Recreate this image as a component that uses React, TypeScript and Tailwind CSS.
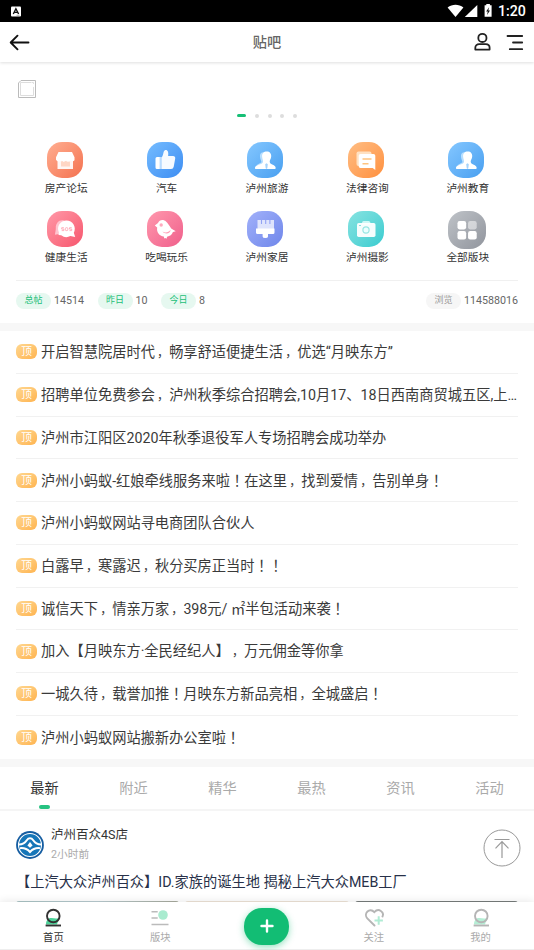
import React from "react";

const sans = "font-[Roboto,'Noto_Sans_CJK_SC',sans-serif] [text-spacing-trim:space-all]";

/* Full-width commas and exclamation marks are centred horizontally in their cell. */
function Txt({ children }: { children: string }) {
  return (
    <>
      {children.split(/([，！])/).map((p, i) => {
        if (p === "，") return <span key={i} className="pl-[2.240px] text-[12px]">{p}</span>;
        if (p === "！") return <span key={i} lang="zh-TW" className="font-['Noto_Sans_CJK_TC',sans-serif]">{p}</span>;
        return p;
      })}
    </>
  );
}

function StatusBar() {
  return (
    <div className="flex h-[22px] shrink-0 items-center bg-black pl-[11px] pr-[8px]">
      <svg width="10" height="11" viewBox="0 0 10 11">
        <rect y="0.5" width="10" height="10" rx="1" fill="#fff" />
        <path d="M2.3 8 4.9 2.8 7.6 8M3.4 6.4h3" stroke="#111" strokeWidth="1.4" fill="none" />
        <path d="M5.5 9.3h3" stroke="#888" strokeWidth="0.6" />
      </svg>
      <svg className="ml-auto" width="46" height="16" viewBox="0 0 46 16">
        <path d="M.6 4.600C5.200.8 11.800.8 16.400 4.600L8.500 14Z" fill="#fff" />
        <path d="M30.300 2v12H17.800Z" fill="#fff" />
        <path d="M37.600 2.300h1.700V1h3.600v1.300h1.700v11.500h-7Z" fill="#fff" />
        <path d="m42.100 4.200-3 4.300h1.700l-.8 3.500 3-4.600h-1.700Z" fill="#111" />
      </svg>
      <span className="ml-[5px] w-[28px] text-[14.200px] leading-none font-medium text-white">1:20</span>
    </div>
  );
}

function Header() {
  return (
    <header className="relative z-10 flex h-10 shrink-0 items-center justify-between bg-white pr-[10px] pl-[9px] shadow-[0_1px_3px_rgba(0,0,0,0.13)]">
      <svg className="w-[76px]" width="76" height="20" viewBox="0 0 76 20" fill="none" stroke="#111" strokeWidth="1.900" strokeLinecap="round" strokeLinejoin="round">
        <path d="M19.500 10.500H2M8.500 3.700 1.700 10.500l6.800 6.800" />
      </svg>
      <h1 className="pt-[2px] pl-[1px] text-[14.200px] font-medium text-[#666]">贴吧</h1>
      <svg width="76" height="22" viewBox="0 0 76 22" fill="none" stroke="#222" strokeWidth="1.800" strokeLinecap="round" strokeLinejoin="round">
        <circle cx="34.400" cy="6.900" r="4.100" />
        <path d="M27.300 18.600v-1.800c0-2.300 1.700-3.600 3.900-3.600h6.500c2.200 0 3.900 1.300 3.900 3.600v1.800Z" />
        <path d="M59.500 5h14.700M65 11.500h9.200M61.800 18.200h12.400" />
      </svg>
    </header>
  );
}

const glyphs: Record<string, React.ReactNode> = {
  shop: (
    <>
      <path d="M10.500 18h15.500v9H10.500z" fill="#fff" fillOpacity=".92" />
      <path d="M14 20.500c0-2 2-2 2.500-.5.800-1.800 3-1.800 3.600 0 .600-1.600 2.700-1.500 2.900.500V24.500h-9z" fill="#ffbb9c" fillOpacity=".55" />
      <path d="M11.500 10h13.500l2.500 5.300v3c-1 1.500-3 1.500-4 .2-1.200 1.500-3.200 1.500-4.400 0-1.200 1.500-3.200 1.500-4.400 0-1.600 1.500-4.600 1.200-5.700-.8v-2.500z" fill="#fff" />
    </>
  ),
  thumb: (
    <>
      <path d="M9.500 15h3.400v12h-2.900q-1.500 0-1.500-1.500v-9q0-1.500 1.500-1.500z" fill="#fff" />
      <path d="M12.800 15h1.800v12h-1.800z" fill="#b9dcff" />
      <path d="M14.500 15.600C16.600 13.500 16 9.500 17.600 8.400c2.400-1.300 4.400 1 3.500 5.600H26c1.600 0 2.500 1 2.200 2.500l-1.500 8.300q-.4 2.200-2.600 2.200h-9.600z" fill="#fff" fillOpacity=".95" />
    </>
  ),
  user: (
    <>
      <path d="M17.500 10.500c-3-.7-5 1.500-4.500 4.500.3 2.600 1.400 3.800 1.400 5.200L9 23.500h9z" fill="#c4e5ff" fillOpacity=".85" />
      <path d="M19.800 9.500c3 0 4.600 2.100 4.400 5-.2 2.700-1.700 3.600-1.500 5.400.5 3 5.800 2.300 6 6.100 0 .6-.3.900-.9.900H8.800c-.6 0-.9-.3-.9-.9.300-3.800 7.500-3.100 8.100-6.100.2-1.800-.7-2.800-.9-5.400-.2-2.900 1.500-5 4.700-5z" fill="#fff" />
      <path d="m19.500 21.200 1.300 1-.5 4-.8.800-.8-.8-.500-4z" fill="#a5d3fb" />
    </>
  ),
  note: (
    <>
      <path d="M10.500 9.500h11q2 0 2 2V24h-13q-2 0-2-2V11.500q0-2 2-2z" fill="#ffe1c2" />
      <path d="M12.500 12h13q1.800 0 1.800 1.800V28l-2.600-2H12.500q-1.800 0-1.800-1.800V13.800q0-1.800 1.800-1.800z" fill="#fff" />
      <path d="M14.500 17h9m-9 4.700h6" stroke="#ffc47f" strokeWidth="1.500" />
    </>
  ),
  sos: (
    <>
      <path d="M17 9.500c-5-1-8.400 2.800-8.200 7.500.1 2-.6 4.500-.9 6.800l4-.8z" fill="#ffc4cf" />
      <path d="M19.500 9.500a8.300 8.300 0 0 1 7.300 12.200l1.400 4.300-4.800-1a8.600 8.600 0 0 1-9.200-.700l-2.700-.3.400-2.500A8.300 8.300 0 0 1 19.500 9.500z" fill="#fff" />
      <g fill="none" stroke="#ffa0ae" strokeWidth=".8">
        <path d="M16.900 16.700h-2.200v1.400h2.200v1.500h-2.200M24.700 16.700h-2.200v1.400h2.200v1.500h-2.200" />
        <rect x="18.400" y="16.700" width="2.400" height="2.900" rx=".8" />
      </g>
    </>
  ),
  bird: (
    <>
      <path d="M7.800 14.500 11 12c1.300-3.600 5.500-4 8-1.600 2 2 3.500 4 5.200 7l4.500 2.800-2.800.9c-.8 2.600-3 4.300-5.800 4.600l-.6 2-1.200-.8-1 .6-.5-1.900c-4.500-.6-7.500-4.500-6.600-9.100z" fill="#fff" />
      <circle cx="14.200" cy="14" r="1.700" fill="#ffa9bd" />
      <path d="M15.500 20.500c3 1.800 6 1 8-1.800.3 3.500-5 5.500-8 1.800z" fill="#ff9db5" />
    </>
  ),
  brush: (
    <>
      <path d="M10.500 9H27v9H10.500z" fill="#fff" fillOpacity=".72" />
      <path d="M14.500 9v4M18.700 9v4M22.900 9v4" stroke="#93a3f4" strokeWidth="1.100" />
      <path d="M9 17.500h18.500v4q0 1.500-1.500 1.500h-5v2.500q0 1.500-2.700 1.500t-2.700-1.500V23h-5q-1.600 0-1.600-1.500z" fill="#fff" />
    </>
  ),
  camera: (
    <>
      <path d="M14 11.500q.2-1.500 1.500-1.500h5.200q1.300 0 1.600 1.500v2H14z" fill="#cdf8f6" />
      <rect x="9" y="12" width="18.500" height="14" rx="1.700" fill="#fff" fillOpacity=".94" />
      <circle cx="18" cy="19" r="3.100" fill="#eaffff" stroke="#99e6e3" strokeWidth="1.200" />
      <path d="M11 14.500h2" stroke="#8be0dd" />
    </>
  ),
  grid: (
    <>
      <rect x="9" y="9.500" width="8.200" height="8" rx="2" fill="#fff" />
      <rect x="19" y="9.500" width="8.200" height="8" rx="2" fill="#fff" fillOpacity=".5" />
      <rect x="9" y="19" width="8.200" height="8" rx="2" fill="#fff" />
      <rect x="19" y="19" width="8.200" height="8" rx="2" fill="#fff" />
    </>
  ),
};

const boards = [
  { t: "房产论坛", g: "shop", c: "from-[#ffae91] to-[#f3714f]" },
  { t: "汽车", g: "thumb", c: "from-[#75bcff] to-[#3d8df2]" },
  { t: "泸州旅游", g: "user", c: "from-[#84c7ff] to-[#479ff0]" },
  { t: "法律咨询", g: "note", c: "from-[#ffbd82] to-[#ff903c]" },
  { t: "泸州教育", g: "user", c: "from-[#84c7ff] to-[#479ff0]" },
  { t: "健康生活", g: "sos", c: "from-[#ff98a8] to-[#f6546d]" },
  { t: "吃喝玩乐", g: "bird", c: "from-[#ff98ae] to-[#ef5e8b]" },
  { t: "泸州家居", g: "brush", c: "from-[#a2b1fa] to-[#6f86ea]" },
  { t: "泸州摄影", g: "camera", c: "from-[#85e3e1] to-[#33ccd0]" },
  { t: "全部版块", g: "grid", c: "from-[#bfc3c8] to-[#91959d]" },
];

function Boards() {
  return (
    <div className="mx-4 mt-[24px] grid h-[138px] grid-cols-5 grid-rows-[69px_69px]">
      {boards.map((b) => (
        <div key={b.t} className="flex flex-col items-center">
          <div className="flex h-[40px] items-start pr-[3px]">
            <div
              className={`${b.g === "grid" ? "ml-[2px] size-[38px] rounded-[16px]" : "size-9 rounded-[15px]"} bg-linear-to-br ${b.c}`}
            >
              <svg viewBox="0 0 36 36" className="size-full">{glyphs[b.g]}</svg>
            </div>
          </div>
          <span className="text-[10.700px] leading-[14px] text-[#333]">{b.t}</span>
        </div>
      ))}
    </div>
  );
}

function Stat({ label, value, gray }: { label: string; value: string; gray?: boolean }) {
  return (
    <div className="flex items-center gap-[3px]">
      <span
        className={`flex h-4 w-[35px] items-center justify-center rounded-full pb-px text-[9px] ${gray ? "bg-[#f6f6f6] text-[#999]" : "bg-[#e6f8f0] text-[#1bbf78]"}`}
      >
        {label}
      </span>
      <span className="text-[10.700px] text-[#666]">{value}</span>
    </div>
  );
}

const posts = [
  "开启智慧院居时代，畅享舒适便捷生活，优选“月映东方”",
  "招聘单位免费参会，泸州秋季综合招聘会,10月17、18日西南商贸城五区,上…",
  "泸州市江阳区2020年秋季退役军人专场招聘会成功举办",
  "泸州小蚂蚁-红娘牵线服务来啦！在这里，找到爱情，告别单身！",
  "泸州小蚂蚁网站寻电商团队合伙人",
  "白露早，寒露迟，秋分买房正当时！！",
  "诚信天下，情亲万家，398元/ ㎡半包活动来袭！",
  "加入【月映东方·全民经纪人】，万元佣金等你拿",
  "一城久待，载誉加推！月映东方新品亮相，全城盛启！",
  "泸州小蚂蚁网站搬新办公室啦！",
];

function ProfileIcon({ active }: { active?: boolean }) {
  const c = active ? "#333" : "#b5b5b5";
  return (
    <svg width="18" height="20" viewBox="0 0 18 20" fill="none">
      <path d="M2 16.500c0-4.500 2.500-7 5.500-6.500 3 .4 5 1 7.500 0l-2 6.500z" fill={active ? "#4ed39a" : "#b5eed5"} />
      <circle cx="9.300" cy="8" r="6.300" stroke={c} strokeWidth="1.900" />
      <path d="M1.600 17.500h15.400" stroke={c} strokeWidth="1.900" />
    </svg>
  );
}

function NavItem({ label, active, children }: { label: string; active?: boolean; children: React.ReactNode }) {
  return (
    <div className="flex flex-1 flex-col items-center pt-[6px]">
      <div className="flex h-[22px] items-start">{children}</div>
      <span className={`text-[10.300px] leading-[15px] ${active ? "text-[#333]" : "text-[#aaa]"}`}>{label}</span>
    </div>
  );
}

export default function App() {
  return (
    <div lang="zh-CN" className={`flex h-[950px] w-[534px] flex-col overflow-hidden bg-white ${sans}`}>
      <StatusBar />
      <Header />
      <main className="min-h-0 flex-1 overflow-hidden">
        <div className="h-[51.500px] pt-[18px] pl-[18px]">
          <svg width="18" height="18" viewBox="0 0 18 18" fill="none">
            <path d="M.5 3 3 .5h14.500v17H.5z" stroke="#bbb" />
            <path d="M2.500 2.500h13v13h-13z" stroke="#ddd" />
            <path d="m13 2 4 3v3l-3-2z" fill="#fff" />
          </svg>
        </div>
        <div className="flex h-[4px] items-center justify-center gap-[8.600px]">
          <i className="h-[3.500px] w-[9px] rounded-full bg-[#16bf76]" />
          <i className="size-[4px] rounded-full bg-[#ddd]" />
          <i className="size-[4px] rounded-full bg-[#ddd]" />
          <i className="size-[4px] rounded-full bg-[#ddd]" />
          <i className="size-[4px] rounded-full bg-[#ddd]" />
        </div>
        <Boards />
        <div className="mx-4 flex h-[43px] items-center border-t border-[#f0f0f0] pb-px">
          <div className="flex gap-[13.500px]">
            <Stat label="总帖" value="14514" />
            <Stat label="昨日" value="10" />
            <Stat label="今日" value="8" />
          </div>
          <div className="ml-auto">
            <Stat label="浏览" value="114588016" gray />
          </div>
        </div>
        <div className="h-[8.500px] bg-[#f7f7f7]" />
        <ul className="px-4">
          {posts.map((p, i) => (
            <li key={p} className={`flex h-[42.750px] items-center border-[#f1f1f1] ${i < 9 ? "border-b" : ""}`}>
              <span className="mr-[4px] flex h-[15px] w-[21px] shrink-0 items-center justify-center rounded-[6px] bg-linear-to-br from-[#ffd78f] to-[#ffb44f] text-[10.700px] leading-[15px] text-white">
                顶
              </span>
              <span className="pt-px text-[14.240px] leading-[22px] whitespace-nowrap text-[#3a3a3a]"><Txt>{p}</Txt></span>
            </li>
          ))}
        </ul>
        <div className="h-[8.500px] bg-[#f7f7f7]" />
        <nav className="flex h-[44px] border-b-2 border-[#f5f5f5]">
          {["最新", "附近", "精华", "最热", "资讯", "活动"].map((t, i) => (
            <div key={t} className="flex flex-1 flex-col items-center justify-between">
              <span className={`pt-[10px] text-[14.200px] leading-[22px] ${i ? "text-[#aaa]" : "text-[#333]"}`}>{t}</span>
              {i === 0 && <i className="h-[4px] w-[11px] rounded-[2px] bg-[#26c281]" />}
            </div>
          ))}
        </nav>
        <article className="px-4 pt-[14px]">
          <div className="flex h-[46px] items-start">
            <svg className="mt-[6px]" width="28" height="28" viewBox="0 0 28 28" fill="none">
              <circle cx="14" cy="14" r="13.900" fill="#155da1" />
              <circle cx="14" cy="14" r="11.500" stroke="#fff" strokeWidth="1.100" fill="#1676b8" />
              <path d="M3 13.500c4 0 6-1.500 8-4.500 1.500-2.300 4.500-2.300 6 0 2 3 4 4.500 8 4.500" stroke="#fff" strokeWidth="2" />
              <path d="M4 17.200c4.500-.5 7 .5 10 3.800 3-3.300 5.500-4.300 10-3.800" stroke="#fff" strokeWidth="2" />
              <path d="m14 11 2.600 3.400L14 16.800l-2.600-2.400z" fill="#fff" />
            </svg>
            <div className="ml-[7px] flex flex-col">
              <span className="text-[12.500px] leading-[19px] text-[#333]">泸州百众4S店</span>
              <span className="text-[10.700px] leading-[21px] text-[#aaa]">2小时前</span>
            </div>
            <svg className="mt-[4px] -mr-[3px] ml-auto" width="38" height="38" viewBox="0 0 38 38" fill="none" stroke="#999">
              <circle cx="19" cy="19" r="18" />
              <path d="M11.500 10.500h15M19 29V12.500M12.500 19.300 19 12.700l6.500 6.600" strokeWidth="1.200" />
            </svg>
          </div>
          <h2 className="text-[14.240px] leading-[22px] text-[#283149]">【上汽大众泸州百众】ID.家族的诞生地 揭秘上汽大众MEB工厂</h2>
          <div className="mt-[8px] grid grid-cols-3 gap-[6px]">
            <i className="h-20 rounded-[3px] bg-linear-to-r from-[#a9c3c4] via-[#b9cbd0] to-[#a6a99b]" />
            <i className="h-20 rounded-[3px] bg-[#eee3d7]" />
            <i className="h-20 rounded-[3px] bg-[#777c7b]" />
          </div>
        </article>
      </main>
      <footer className="relative z-10 flex h-[48px] shrink-0 border-b border-[#eee] bg-white shadow-[0_-1px_8px_rgba(0,0,0,0.09)]">
        <NavItem label="首页" active><ProfileIcon active /></NavItem>
        <NavItem label="版块">
          <svg width="18" height="20" viewBox="0 0 18 20" fill="none">
            <circle cx="12" cy="7" r="4.800" fill="#a9ebcf" />
            <path d="M.5 3.700h6.200M.5 9.900h6.200M.5 16.500h17" stroke="#bbb" strokeWidth="1.500" />
          </svg>
        </NavItem>
        <div className="flex flex-1 items-center justify-center pt-px">
          <div className="flex h-[37px] w-[45px] items-center justify-center rounded-[18px] bg-[#12bd74] shadow-[0_2px_7px_rgba(18,189,116,0.45)]">
            <svg width="14" height="14" viewBox="0 0 14 14"><path d="M7 1.500v11M1.500 7h11" stroke="#fff" strokeWidth="2.400" strokeLinecap="round" /></svg>
          </div>
        </div>
        <NavItem label="关注">
          <svg width="20" height="20" viewBox="0 0 20 20" fill="none">
            <path d="M10.500 17.500 3.300 10.400C-.9 5.600 5.600-1 10.300 4.200 14.800-.7 20.500 4.300 18.500 8.500" stroke="#b5b5b5" strokeWidth="1.900" strokeLinecap="round" />
            <path d="M14.700 8.300v8.400M10.500 12.500h8.400" stroke="#b0ecd4" strokeWidth="2" />
          </svg>
        </NavItem>
        <NavItem label="我的"><ProfileIcon /></NavItem>
      </footer>
    </div>
  );
}
